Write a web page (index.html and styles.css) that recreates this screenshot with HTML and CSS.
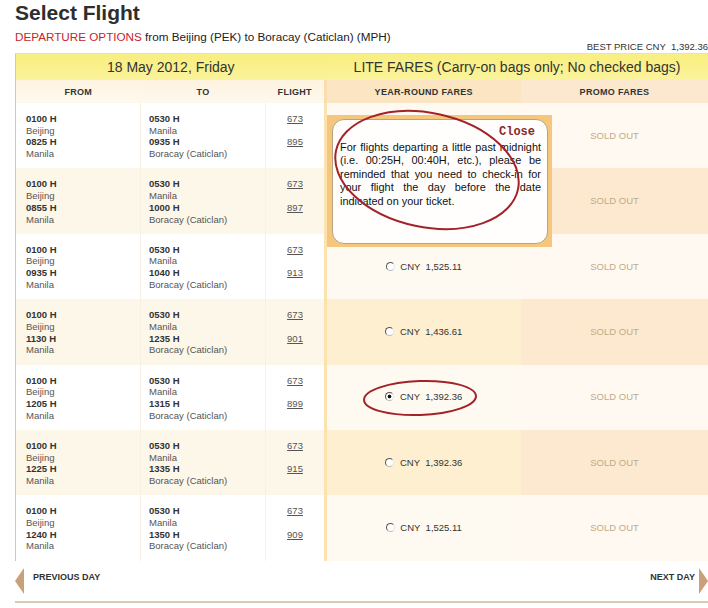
FILE: index.html
```html
<!DOCTYPE html>
<html>
<head>
    <title>Select Flight</title>
    <link rel="stylesheet" href="styles.css">
</head>
<body>
<div class="page">
    <h1>Select Flight</h1>
    <p class="route"><span class="route-label">DEPARTURE OPTIONS</span> from Beijing (PEK) to Boracay (Caticlan) (MPH)</p>
    <p class="best-price">BEST PRICE CNY&nbsp; 1,392.36</p>

    <table class="flights">
        <colgroup>
            <col class="c-from">
            <col class="c-to">
            <col class="c-flight">
            <col class="c-year">
            <col class="c-promo">
        </colgroup>
        <tr class="day-row">
            <th colspan="3">18 May 2012, Friday</th>
            <th colspan="2">LITE FARES (Carry-on bags only; No checked bags)</th>
        </tr>
        <tr class="col-row">
            <th class="h-left">FROM</th>
            <th class="h-left">TO</th>
            <th class="h-left">FLIGHT</th>
            <th class="h-year">YEAR-ROUND FARES</th>
            <th class="h-promo">PROMO FARES</th>
        </tr>
        <tr class="odd">
            <td class="from"><b>0100 H</b><br>Beijing<br><b>0825 H</b><br>Manila</td>
            <td class="to"><b>0530 H</b><br>Manila<br><b>0935 H</b><br>Boracay (Caticlan)</td>
            <td class="flight"><a href="#">673</a><br><br><a href="#">895</a></td>
            <td class="year"><label><input type="radio" name="fare" class="fare-radio"> CNY&nbsp; 1,525.11</label></td>
            <td class="promo">SOLD OUT</td>
        </tr>
        <tr class="even">
            <td class="from"><b>0100 H</b><br>Beijing<br><b>0855 H</b><br>Manila</td>
            <td class="to"><b>0530 H</b><br>Manila<br><b>1000 H</b><br>Boracay (Caticlan)</td>
            <td class="flight"><a href="#">673</a><br><br><a href="#">897</a></td>
            <td class="year"><label><input type="radio" name="fare" class="fare-radio"> CNY&nbsp; 1,525.11</label></td>
            <td class="promo">SOLD OUT</td>
        </tr>
        <tr class="odd">
            <td class="from"><b>0100 H</b><br>Beijing<br><b>0935 H</b><br>Manila</td>
            <td class="to"><b>0530 H</b><br>Manila<br><b>1040 H</b><br>Boracay (Caticlan)</td>
            <td class="flight"><a href="#">673</a><br><br><a href="#">913</a></td>
            <td class="year"><label><input type="radio" name="fare" class="fare-radio"> CNY&nbsp; 1,525.11</label></td>
            <td class="promo">SOLD OUT</td>
        </tr>
        <tr class="even">
            <td class="from"><b>0100 H</b><br>Beijing<br><b>1130 H</b><br>Manila</td>
            <td class="to"><b>0530 H</b><br>Manila<br><b>1235 H</b><br>Boracay (Caticlan)</td>
            <td class="flight"><a href="#">673</a><br><br><a href="#">901</a></td>
            <td class="year"><label><input type="radio" name="fare" class="fare-radio"> CNY&nbsp; 1,436.61</label></td>
            <td class="promo">SOLD OUT</td>
        </tr>
        <tr class="odd">
            <td class="from"><b>0100 H</b><br>Beijing<br><b>1205 H</b><br>Manila</td>
            <td class="to"><b>0530 H</b><br>Manila<br><b>1315 H</b><br>Boracay (Caticlan)</td>
            <td class="flight"><a href="#">673</a><br><br><a href="#">899</a></td>
            <td class="year"><label><input type="radio" name="fare" class="fare-radio" checked> CNY&nbsp; 1,392.36</label></td>
            <td class="promo">SOLD OUT</td>
        </tr>
        <tr class="even">
            <td class="from"><b>0100 H</b><br>Beijing<br><b>1225 H</b><br>Manila</td>
            <td class="to"><b>0530 H</b><br>Manila<br><b>1335 H</b><br>Boracay (Caticlan)</td>
            <td class="flight"><a href="#">673</a><br><br><a href="#">915</a></td>
            <td class="year"><label><input type="radio" name="fare" class="fare-radio"> CNY&nbsp; 1,392.36</label></td>
            <td class="promo">SOLD OUT</td>
        </tr>
        <tr class="odd">
            <td class="from"><b>0100 H</b><br>Beijing<br><b>1240 H</b><br>Manila</td>
            <td class="to"><b>0530 H</b><br>Manila<br><b>1350 H</b><br>Boracay (Caticlan)</td>
            <td class="flight"><a href="#">673</a><br><br><a href="#">909</a></td>
            <td class="year"><label><input type="radio" name="fare" class="fare-radio"> CNY&nbsp; 1,525.11</label></td>
            <td class="promo">SOLD OUT</td>
        </tr>
    </table>

    <div class="day-nav">
        <a href="#" class="prev-day"><span class="arrow arrow-left"></span><span class="nav-label">PREVIOUS DAY</span></a>
        <a href="#" class="next-day"><span class="nav-label">NEXT DAY</span><span class="arrow arrow-right"></span></a>
    </div>

    <!-- midnight notice popup -->
    <div class="notice">
        <div class="notice-inner">
            <div class="notice-close">Close</div>
            <p>For flights departing a little past midnight (i.e. 00:25H, 00:40H, etc.), please be reminded that you need to check-in for your flight the day before the date indicated on your ticket.</p>
        </div>
    </div>

    <!-- hand drawn marks -->
    <svg class="marks" width="708" height="608" viewBox="0 0 708 608">
        <ellipse cx="427" cy="170" rx="93" ry="57" transform="rotate(12 427 170)" fill="none" stroke="#a3222a" stroke-width="2"/>
        <ellipse cx="420" cy="398" rx="56" ry="17" transform="rotate(-2 420 398)" fill="none" stroke="#a3222a" stroke-width="2"/>
    </svg>
</div>
</body>
</html>
```

FILE: styles.css
```css
body {
    margin: 0;
    font-family: "Liberation Sans", Arial, sans-serif;
    color: #333;
    background-color: white;
    overflow: hidden;
}
.page {
    position: relative;
    width: 693px;
    padding-left: 15px;
    height: 608px;
}
h1 {
    margin: 0;
    font-size: 21px;
    line-height: 25px;
    font-weight: bold;
    color: #2e2e2e;
}
.route {
    margin: 5px 0 0;
    font-size: 11.7px;
    line-height: 14px;
    color: #222;
}
.route-label {
    color: #c4262e;
}
.best-price {
    margin: -2px 0 1px;
    font-size: 9.5px;
    line-height: 10px;
    text-align: right;
    color: #333;
}

/* flights table */
.flights {
    width: 693px;
    border-collapse: collapse;
    table-layout: fixed;
    border-left: 1px solid #c8c8c8;
    border-top: 1px solid #e6dfbf;
}
.c-from { width: 125px; }
.c-to { width: 125px; }
.c-flight { width: 60px; }
.c-year { width: 195px; }
.c-promo { width: 188px; }
.flights th {
    padding: 0;
    font-weight: normal;
}
.day-row th {
    height: 26px;
    font-size: 14px;
    color: #333;
    white-space: nowrap;
    background: linear-gradient(#f8ee7e, #faf39c);
}
.col-row th {
    height: 23px;
    font-size: 9px;
    font-weight: bold;
    letter-spacing: 0.3px;
    color: #333;
}
.col-row .h-left {
    background: linear-gradient(#fdf3df, #fef8ee);
}
.col-row .h-year {
    background-color: #fbe5c2;
    border-left: 3px solid #f9ddaa;
}
.col-row .h-promo {
    background-color: #fce7cf;
}
.flights td {
    height: 65.4px;
    padding: 0;
    font-size: 9.5px;
    line-height: 11.7px;
    color: #555;
    box-sizing: border-box;
}
.flights td b {
    color: #333;
}
.flights td.from, .flights td.to, .flights td.flight {
    vertical-align: top;
    padding-top: 10px;
    border-right: 1px solid #f7f1e4;
}
.flights td.from { padding-left: 10px; }
.flights td.to { padding-left: 8px; }
.flights td.flight { text-align: center; }
.flight a {
    color: #555;
}
.flights td.year {
    text-align: center;
    color: #333;
    border-left: 3px solid #fbe2ae;
}
.flights td.promo {
    text-align: center;
    color: #c0ab88;
}
.odd td.from, .odd td.to, .odd td.flight { background-color: #ffffff; }
.odd td.year { background-color: #fffaf1; }
.odd td.promo { background-color: #fff9f1; }
.even td.from, .even td.to, .even td.flight { background-color: #fdf7e9; }
.even td.year { background-color: #fdefcf; }
.even td.promo { background-color: #fde9d0; }

.fare-radio {
    appearance: none;
    -webkit-appearance: none;
    width: 9px;
    height: 9px;
    margin: 0 3px 0 0;
    vertical-align: -1px;
    border-radius: 50%;
    border: 1.5px solid #555;
    border-right-color: #e4e4e4;
    border-bottom-color: #bbb;
    box-sizing: border-box;
    background-color: white;
}
.fare-radio:checked {
    background: radial-gradient(circle, #111 0, #111 1.6px, white 2.2px);
}

/* previous / next day */
.day-nav {
    display: flex;
    justify-content: space-between;
    align-items: flex-start;
    height: 42px;
    padding-top: 7px;
    border-bottom: 2px solid #d9cab2;
    box-sizing: border-box;
}
.day-nav a {
    display: flex;
    align-items: flex-start;
    height: 26px;
    font-size: 9px;
    font-weight: bold;
    line-height: 10px;
    color: #333;
    text-decoration: none;
}
.nav-label {
    margin-top: 4px;
}
.prev-day { gap: 9px; }
.next-day { gap: 4px; }
.arrow {
    width: 0;
    height: 0;
    border-top: 13px solid transparent;
    border-bottom: 13px solid transparent;
}
.arrow-left {
    border-right: 9px solid #c9a07a;
}
.arrow-right {
    border-left: 9px solid #c9a07a;
}

/* popup */
.notice {
    position: absolute;
    left: 327px;
    top: 115px;
    width: 225px;
    height: 132px;
    padding: 4px 4px 3px 5px;
    box-sizing: border-box;
    background-color: #f4c77c;
}
.notice-inner {
    height: 100%;
    box-sizing: border-box;
    padding: 5px 6px 0 7px;
    background-color: #fffefc;
    border: 1px solid #b9a27e;
    border-radius: 12px;
}
.notice-close {
    text-align: right;
    font-family: "Liberation Mono", "Courier New", monospace;
    font-weight: bold;
    font-size: 12px;
    line-height: 14px;
    color: #8b2a2a;
    padding-right: 6px;
}
.notice p {
    margin: 2px 0 0;
    font-size: 10.9px;
    line-height: 13.4px;
    text-align: justify;
    color: #111;
}
.marks {
    position: absolute;
    left: 0;
    top: 0;
    pointer-events: none;
}
```
